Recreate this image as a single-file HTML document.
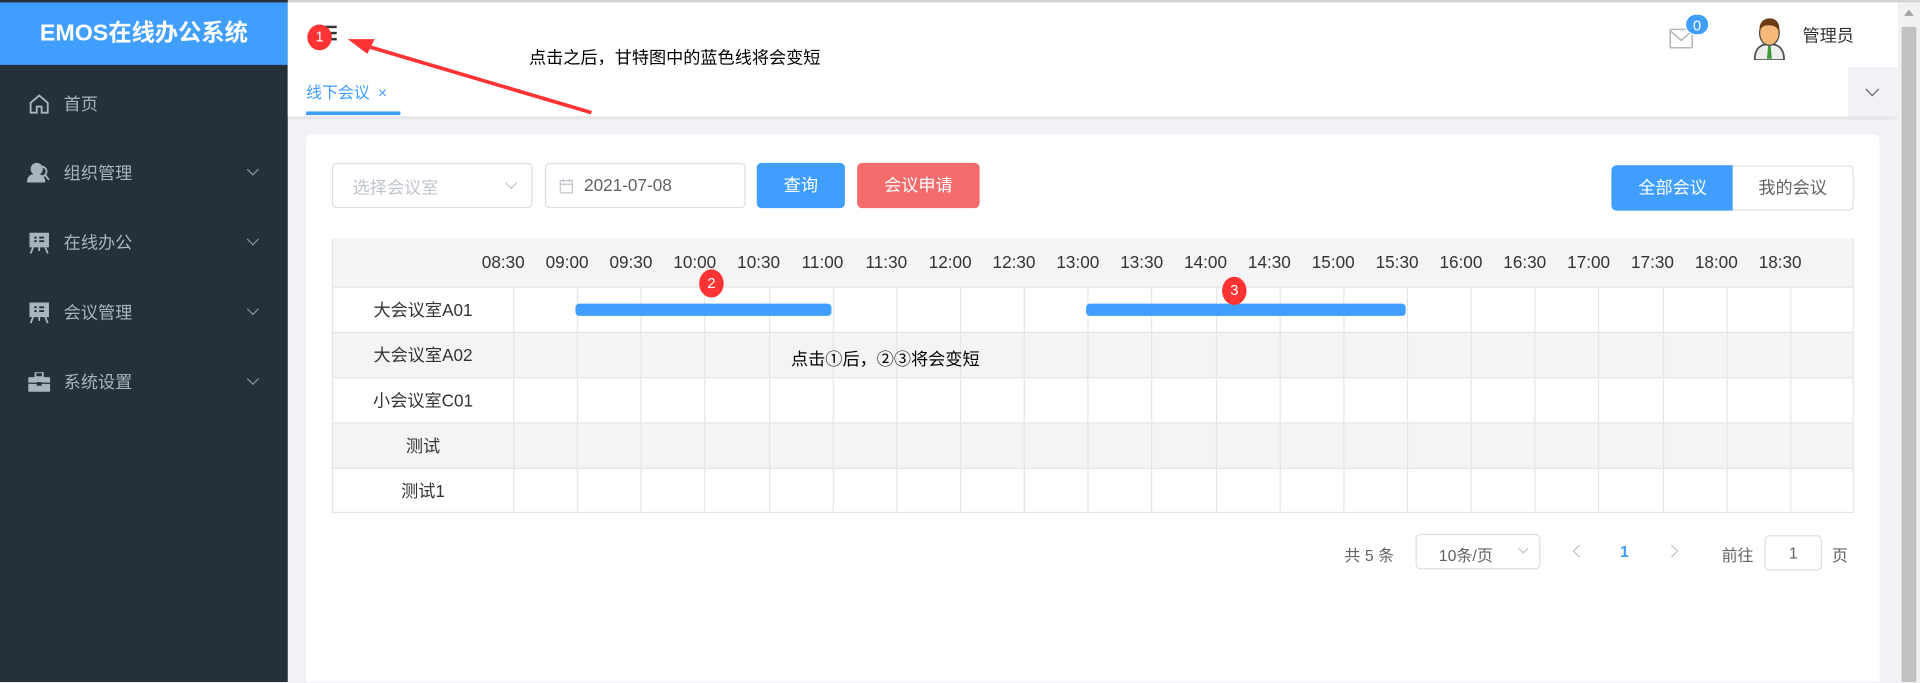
<!DOCTYPE html>
<html><head><meta charset="utf-8"><style>
*{margin:0;padding:0;box-sizing:border-box}
html,body{width:1920px;height:683px;overflow:hidden;background:#f0f2f5}
body{font-family:"Liberation Sans","Noto Sans CJK SC",sans-serif;position:relative}
#w{position:absolute;left:0;top:0;width:1568px;height:557.7px;overflow:hidden;transform:scale(1.22449);transform-origin:0 0;background:#f0f2f5}
.a{position:absolute}
.side{left:0;top:0;width:235px;height:557px;background:#263038}
.logo{left:0;top:2px;width:235px;height:51px;background:#409eff;color:#fff;font-weight:bold;font-size:19px;text-align:center;line-height:51px}
.mi{left:0;width:235px;height:20px;color:#aab4bd;font-size:14px}
.mi span{position:absolute;left:52px;top:0;line-height:20px}
.mi i{position:absolute;left:203px;top:4px;width:7px;height:7px;border-right:1px solid #8a949c;border-bottom:1px solid #8a949c;transform:rotate(45deg)}
.hdr{left:235px;top:2px;width:1315px;height:51px;background:#fff}
.tabs{left:235px;top:53px;width:1315px;height:42px;background:#fff;box-shadow:0 2px 3px rgba(0,0,0,.08)}
.card{left:250px;top:110px;width:1285px;height:447px;background:#fff;border-radius:4px 4px 0 0}
.inp{border:1px solid #dcdfe6;border-radius:4px;background:#fff;font-size:14px}
.btn{border-radius:4px;color:#fff;font-size:14px;text-align:center;line-height:36px}
.tbl{left:271px;top:195px;width:1243px;height:224px;border:1px solid #e4e4e4}
.row{position:absolute;left:0;width:1241px;height:37px;border-top:1px solid #e4e4e4}
.rl{position:absolute;left:0;width:147px;text-align:center;font-size:14px;color:#333;line-height:36px}
.vl{position:absolute;top:38px;width:1px;height:185px;background:#e6e6e6}
.tl{position:absolute;top:10px;font-size:14px;color:#333;width:44px;text-align:center}
.rb{position:absolute;background:#f33;color:#fff;font-size:12px;text-align:center;border-radius:50%}
.pg{font-size:13px;color:#606266}
</style></head><body><div id="w">
<div class="a" style="left:0;top:0;width:1568px;height:2px;background:#d4d4d4"></div>
<div class="a side"></div>
<div class="a logo">EMOS在线办公系统</div>
<div class="a mi" style="top:75px"><svg class="a" style="left:23px;top:1px" width="18" height="18" viewBox="0 0 18 18" fill="none" stroke="#aab4bd" stroke-width="1.5"><path d="M2 8L9 2L16 8V16H11V11H7V16H2Z"/></svg><span>首页</span></div>
<div class="a mi" style="top:131px"><svg class="a" style="left:22px;top:1px" width="19" height="18" viewBox="0 0 19 18"><circle cx="8" cy="6" r="5" fill="#aab4bd"/><path d="M0 17C0 11 4 10 8 10C12 10 15 12 15 17Z" fill="#aab4bd"/><circle cx="12" cy="8" r="4" fill="none" stroke="#aab4bd" stroke-width="1.5"/><path d="M15 11L18 15" stroke="#aab4bd" stroke-width="1.5"/></svg><span>组织管理</span><i></i></div>
<div class="a mi" style="top:188px"><svg class="a" style="left:24px;top:2px" width="16" height="17" viewBox="0 0 16 17"><rect x="0" y="0" width="16" height="12" fill="#aab4bd"/><path d="M4 4H6M8 4H12M4 7H6M8 7H12" stroke="#263038" stroke-width="1.5"/><path d="M3 12L1 17M13 12L15 17M8 12V15" stroke="#aab4bd" stroke-width="1.5"/></svg><span>在线办公</span><i></i></div>
<div class="a mi" style="top:245px"><svg class="a" style="left:24px;top:2px" width="16" height="17" viewBox="0 0 16 17"><rect x="0" y="0" width="16" height="12" fill="#aab4bd"/><path d="M4 4H6M8 4H12M4 7H6M8 7H12" stroke="#263038" stroke-width="1.5"/><path d="M3 12L1 17M13 12L15 17M8 12V15" stroke="#aab4bd" stroke-width="1.5"/></svg><span>会议管理</span><i></i></div>
<div class="a mi" style="top:302px"><svg class="a" style="left:23px;top:2px" width="18" height="16" viewBox="0 0 18 16"><rect x="6" y="0" width="6" height="4" fill="none" stroke="#aab4bd" stroke-width="1.5"/><rect x="0" y="4" width="18" height="12" rx="1" fill="#aab4bd"/><path d="M0 9H18" stroke="#263038"/><rect x="7" y="8" width="4" height="3" fill="#263038"/></svg><span>系统设置</span><i></i></div>

<div class="a hdr"></div>
<div class="a" style="left:263px;top:21px;width:12px;height:2px;background:#333"></div>
<div class="a" style="left:263px;top:26px;width:12px;height:2px;background:#333"></div>
<div class="a" style="left:263px;top:31px;width:12px;height:2px;background:#333"></div>
<div class="a" style="left:432px;top:37px;font-size:14px;color:#000">点击之后，甘特图中的蓝色线将会变短</div>
<svg class="a" style="left:1362px;top:20px" width="24" height="22" viewBox="0 0 24 22" fill="none" stroke="#b8b8b8" stroke-width="1.3"><rect x="2" y="4" width="18" height="15" rx="1"/><path d="M2 5L11 13L20 5"/></svg>
<div class="a" style="left:1376px;top:11px;width:20px;height:18px;border-radius:9px;background:#409eff;color:#fff;font-size:12px;text-align:center;line-height:18px;border:1px solid #fff">0</div>
<svg class="a" style="left:1430px;top:13px" width="30" height="36" viewBox="0 0 30 36"><path d="M3 36C3 26 8 23 15 23C22 23 27 26 27 36Z" fill="#eee" stroke="#555" stroke-width="1.5"/><path d="M14 24L16 24L17 35L13 35Z" fill="#3a9a3a"/><ellipse cx="15" cy="14" rx="8" ry="10" fill="#f5b878" stroke="#444"/><path d="M7 13C6 4 12 2 15 2C20 2 24 5 23 13C21 8 17 7 11 8C9 9 8 10 7 13Z" fill="#6b3b12"/></svg>
<div class="a" style="left:1472px;top:19px;font-size:14px;color:#333">管理员</div>

<div class="a tabs"></div>
<div class="a" style="left:250px;top:65px;font-size:13px;color:#409eff">线下会议 <span style="margin-left:3px">×</span></div>
<div class="a" style="left:250px;top:91px;width:77px;height:3px;background:#409eff"></div>
<div class="a" style="left:1509px;top:55px;width:41px;height:40px;background:#f0f2f5"></div>
<div class="a" style="left:1525px;top:69px;width:8px;height:8px;border-right:1px solid #666;border-bottom:1px solid #666;transform:rotate(45deg)"></div>

<div class="a" style="left:1550px;top:2px;width:18px;height:555px;background:#f1f1f1"></div>
<div class="a" style="left:1553px;top:22px;width:12px;height:535px;background:#c1c1c1"></div>
<div class="a" style="left:1555px;top:8px;width:0;height:0;border-left:4px solid transparent;border-right:4px solid transparent;border-bottom:5px solid #a3a3a3"></div>

<div class="a card"></div>
<div class="a inp" style="left:271px;top:133px;width:164px;height:37px"><span class="a" style="left:16px;top:9px;color:#c0c4cc">选择会议室</span><i class="a" style="left:142px;top:12px;width:7px;height:7px;border-right:1px solid #c0c4cc;border-bottom:1px solid #c0c4cc;transform:rotate(45deg)"></i></div>
<div class="a inp" style="left:445px;top:133px;width:164px;height:37px"><svg class="a" style="left:11px;top:12px" width="11" height="12" viewBox="0 0 11 12" fill="none" stroke="#c0c4cc"><rect x="0.5" y="1.5" width="10" height="10"/><path d="M0.5 4.5H10.5M3 0V3M8 0V3"/></svg><span class="a" style="left:31px;top:9px;color:#606266">2021-07-08</span></div>
<div class="a btn" style="left:618px;top:133px;width:72px;height:37px;background:#409eff">查询</div>
<div class="a btn" style="left:700px;top:133px;width:100px;height:37px;background:#f56c6c">会议申请</div>
<div class="a btn" style="left:1316px;top:135px;width:100px;height:37px;background:#409eff;border-radius:4px 0 0 4px">全部会议</div>
<div class="a btn" style="left:1415px;top:135px;width:99px;height:37px;background:#fff;color:#606266;border:1px solid #dcdfe6;border-left:none;border-radius:0 4px 4px 0;line-height:35px">我的会议</div>

<div class="a tbl">
<div class="row" style="top:-1px;height:39px;background:#f4f4f4;border-top:none"></div>
<div class="row" style="top:38px"><div class="rl">大会议室A01</div></div>
<div class="row" style="top:75px;background:#f4f4f4"><div class="rl">大会议室A02</div></div>
<div class="row" style="top:112px"><div class="rl">小会议室C01</div></div>
<div class="row" style="top:149px;background:#f4f4f4"><div class="rl">测试</div></div>
<div class="row" style="top:186px"><div class="rl">测试1</div></div>
<div id="g"></div>
</div>
<div class="a" style="left:646px;top:283px;font-size:14px;color:#000">点击①后，②③将会变短</div>
<div class="a" style="left:470px;top:248px;width:209px;height:10px;background:#409eff;border-radius:3px"></div>
<div class="a" style="left:887px;top:248px;width:261px;height:10px;background:#409eff;border-radius:3px"></div>

<div class="a rb" style="left:571px;top:220px;width:20px;height:23px;line-height:23px">2</div>
<div class="a rb" style="left:998px;top:226px;width:20px;height:23px;line-height:23px">3</div>
<div class="a rb" style="left:251px;top:20px;width:20px;height:21px;line-height:21px">1</div>
<svg class="a" style="left:280px;top:28px" width="210" height="70" viewBox="0 0 210 70"><path d="M203 64L14 8" stroke="#f33" stroke-width="3"/><path d="M4 4L26 4L20 16Z" fill="#f33"/></svg>

<div class="a pg" style="left:1098px;top:443px">共 5 条</div>
<div class="a inp" style="left:1156px;top:436px;width:102px;height:29px"><span class="a pg" style="left:18px;top:6px">10条/页</span><i class="a" style="left:84px;top:8px;width:6px;height:6px;border-right:1px solid #c0c4cc;border-bottom:1px solid #c0c4cc;transform:rotate(45deg)"></i></div>
<svg class="a" style="left:1284px;top:444px" width="8" height="12" viewBox="0 0 8 12" fill="none" stroke="#c0c4cc"><path d="M6 1L1 6L6 11"/></svg>
<div class="a pg" style="left:1323px;top:443px;color:#409eff;font-weight:bold">1</div>
<svg class="a" style="left:1363px;top:444px" width="8" height="12" viewBox="0 0 8 12" fill="none" stroke="#c0c4cc"><path d="M2 1L7 6L2 11"/></svg>
<div class="a pg" style="left:1406px;top:443px">前往</div>
<div class="a inp" style="left:1441px;top:437px;width:47px;height:29px;text-align:center;line-height:27px;font-size:13px;color:#606266">1</div>
<div class="a pg" style="left:1496px;top:443px">页</div>
</div>
<script>
var g=document.getElementById('g'),h='';
var L=['08:30','09:00','09:30','10:00','10:30','11:00','11:30','12:00','12:30','13:00','13:30','14:00','14:30','15:00','15:30','16:00','16:30','17:00','17:30','18:00','18:30'];
for(var i=0;i<21;i++){var x=147+i*52.14;h+='<div class="vl" style="left:'+x+'px"></div><div class="tl" style="left:'+(x-30)+'px">'+L[i]+'</div>';}
g.innerHTML=h;
</script>
</body></html>
